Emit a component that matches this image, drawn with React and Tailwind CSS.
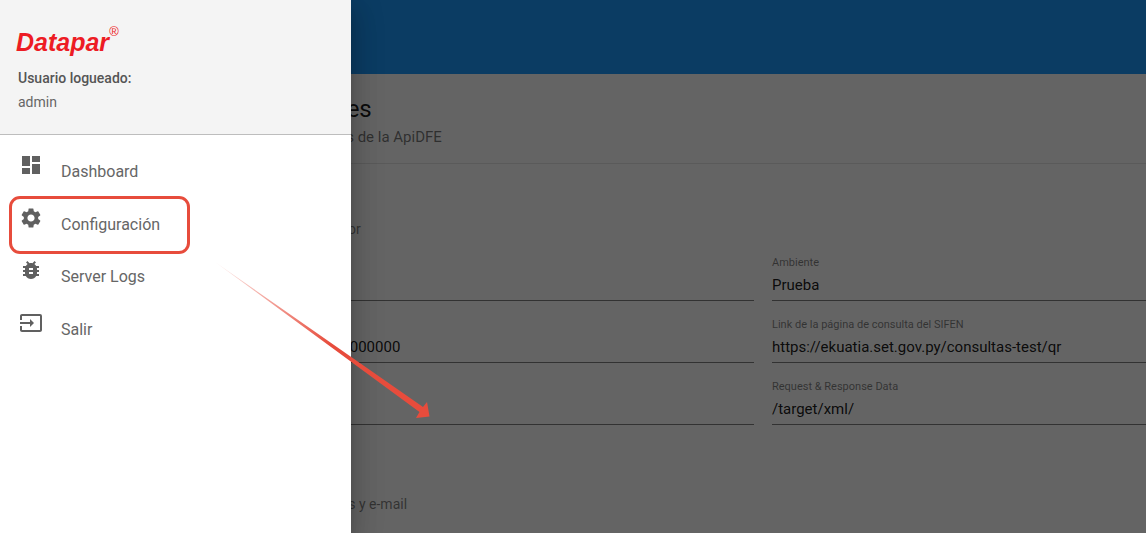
import { MdDashboard, MdSettings, MdBugReport, MdInput } from 'react-icons/md'

const rows = [
  { label: 'Puerto', value: '8080', label2: 'Ambiente', value2: 'Prueba' },
  { label: 'Id CSC', value: '000000000000000000000000', label2: 'Link de la página de consulta del SIFEN', value2: 'https://ekuatia.set.gov.py/consultas-test/qr' },
  { label: 'Carpeta', value: '/target', label2: 'Request & Response Data', value2: '/target/xml/' },
]

const menu = [
  { label: 'Dashboard', icon: MdDashboard },
  { label: 'Configuración', icon: MdSettings },
  { label: 'Server Logs', icon: MdBugReport },
  { label: 'Salir', icon: MdInput },
]

function Field({ label, value }) {
  return (
    <div className="h-[62px] flex flex-col justify-end border-b border-black/50">
      <span className="text-[11px] leading-[14px] text-black/50">{label}</span>
      <span className="text-[15px] leading-[20px] mt-[5px] mb-[5px] text-black/90 whitespace-nowrap">{value}</span>
    </div>
  )
}

function Page() {
  return (
    <div className="h-full flex flex-col bg-[#fafafa]">
      <div className="h-[74px] shrink-0 bg-[#1c96f7]" />
      <div className="h-[90px] shrink-0 pl-[198px] pt-[20px] border-b border-black/10">
        <h1 className="text-[24px] leading-[30px] text-black/90">Configuraciones</h1>
        <p className="text-[15px] leading-[20px] mt-[3px] text-black/55">Ver las configuraciones de la ApiDFE</p>
      </div>
      <div className="pl-[198px]">
        <p className="text-[15px] leading-[20px] mt-[30px] text-black/90">Servidor</p>
        <p className="text-[14px] leading-[20px] mt-[5px] text-black/50">Configuración del servidor</p>
        <div className="grid grid-cols-[556px_556px] gap-x-[18px] mt-[0px]">
          {rows.map(r => [
            <Field key={r.label} label={r.label} value={r.value} />,
            <Field key={r.label2} label={r.label2} value={r.value2} />,
          ])}
        </div>
        <p className="text-[15px] leading-[20px] mt-[42px] text-black/90">Notificaciones</p>
        <p className="text-[14px] leading-[20px] mt-[7px] text-black/50">Configuración de clientes y e-mail</p>
      </div>
    </div>
  )
}

function Drawer() {
  return (
    <aside className="absolute inset-y-0 left-0 w-[351px] bg-white shadow-[0_8px_10px_-5px_rgba(0,0,0,.2),0_16px_24px_2px_rgba(0,0,0,.14),0_6px_30px_5px_rgba(0,0,0,.12)]">
      <div className="h-[135px] bg-[#f4f4f4] border-b border-[#bdbdbd] pl-[18px] pt-[26px]">
        <div className="-ml-[2px] h-[32px] leading-[32px] text-[#ed1c24] font-bold italic text-[25px] font-['Liberation_Sans',sans-serif]">
          Datapar<sup className="text-[13px] font-normal align-[9px] leading-none">®</sup>
        </div>
        <p className="mt-[9px] text-[14px] leading-[22px] font-medium text-[#555]">Usuario logueado:</p>
        <p className="mt-[2px] text-[14px] leading-[22px] text-[#666]">admin</p>
      </div>
      <nav className="pt-[11px]">
        {menu.map(({ label, icon: Icon }) => (
          <div key={label} className="h-[52.6px] flex items-start pl-[19px] text-[#666]">
            <Icon className="w-[24px] h-[24px] mt-[7px] text-[#606060]" />
            <span className="ml-[18px] mt-[15px] text-[16px] leading-[22px]">{label}</span>
          </div>
        ))}
      </nav>
    </aside>
  )
}

export default function App() {
  return (
    <div className="relative w-[1146px] h-[533px] overflow-hidden font-['Roboto',sans-serif]">
      <Page />
      <div className="absolute inset-0 bg-black/60" />
      <Drawer />
      {/* annotation */}
      <div className="absolute left-[9px] top-[196px] w-[181px] h-[58px] rounded-[11px] border-[3px] border-[#e74c3c]" />
      <svg className="absolute inset-0 pointer-events-none" width="1146" height="533" viewBox="0 0 1146 533">
        <defs>
          <linearGradient id="arrow" gradientUnits="userSpaceOnUse" x1="215" y1="262" x2="330" y2="345">
            <stop offset="0" stopColor="#e74c3c" stopOpacity="0.1" />
            <stop offset="1" stopColor="#e74c3c" />
          </linearGradient>
        </defs>
        <polygon points="215,262 423,407 427,402 429.5,416.5 416,418 419.5,412" fill="url(#arrow)" />
      </svg>
    </div>
  )
}
